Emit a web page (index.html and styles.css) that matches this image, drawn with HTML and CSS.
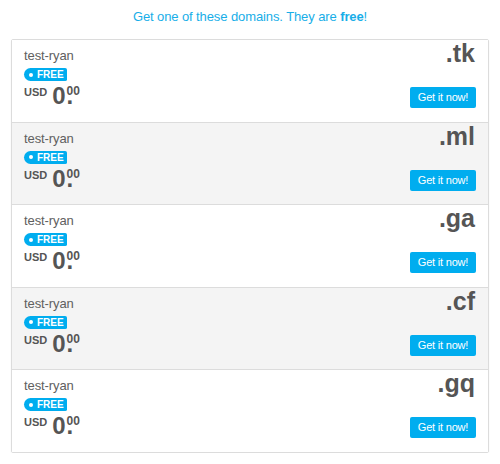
FILE: index.html
```html
<!DOCTYPE html>
<html>
<head>
<meta charset="utf-8">
<link rel="stylesheet" href="styles.css">
</head>
<body>
<p class="headline">Get one of these domains. They are <b>free</b>!</p>
<div class="card">
  <div class="row">
    <div class="left">
      <div class="name">test-ryan</div>
      <span class="badge"><span class="dot"></span>FREE</span>
      <div class="price"><span class="cur">USD</span><span class="int">0</span><span class="dec">00</span></div>
    </div>
    <div class="right">
      <div class="tld">.tk</div>
      <button class="btn">Get it now!</button>
    </div>
  </div>
  <div class="row alt">
    <div class="left">
      <div class="name">test-ryan</div>
      <span class="badge"><span class="dot"></span>FREE</span>
      <div class="price"><span class="cur">USD</span><span class="int">0</span><span class="dec">00</span></div>
    </div>
    <div class="right">
      <div class="tld">.ml</div>
      <button class="btn">Get it now!</button>
    </div>
  </div>
  <div class="row">
    <div class="left">
      <div class="name">test-ryan</div>
      <span class="badge"><span class="dot"></span>FREE</span>
      <div class="price"><span class="cur">USD</span><span class="int">0</span><span class="dec">00</span></div>
    </div>
    <div class="right">
      <div class="tld">.ga</div>
      <button class="btn">Get it now!</button>
    </div>
  </div>
  <div class="row alt">
    <div class="left">
      <div class="name">test-ryan</div>
      <span class="badge"><span class="dot"></span>FREE</span>
      <div class="price"><span class="cur">USD</span><span class="int">0</span><span class="dec">00</span></div>
    </div>
    <div class="right">
      <div class="tld">.cf</div>
      <button class="btn">Get it now!</button>
    </div>
  </div>
  <div class="row">
    <div class="left">
      <div class="name">test-ryan</div>
      <span class="badge"><span class="dot"></span>FREE</span>
      <div class="price"><span class="cur">USD</span><span class="int">0</span><span class="dec">00</span></div>
    </div>
    <div class="right">
      <div class="tld">.gq</div>
      <button class="btn">Get it now!</button>
    </div>
  </div>
</div>
</body>
</html>
```
FILE: styles.css
```css
* { box-sizing: border-box; }
html, body { margin: 0; padding: 0; background: #fff; }
body {
  font-family: "Liberation Sans", Arial, Helvetica, sans-serif;
  color: #555;
  padding: 0 11px;
  width: 500px;
}
.headline {
  margin: 0;
  padding-top: 9px;
  height: 39px;
  text-align: center;
  color: #17aee8;
  font-size: 13px;
  line-height: 16px;
  letter-spacing: -0.1px;
}
.headline b { font-weight: bold; }
.card {
  width: 478px;
  border: 1px solid #dcdcdc;
  border-radius: 2px;
  box-shadow: 0 1px 2px rgba(0,0,0,0.05);
}
.row {
  display: flex;
  justify-content: space-between;
  height: 82.5px;
  padding: 8px 13px 0 12px;
  border-top: 1px solid #dcdcdc;
  background: #fff;
}
.row:first-child { border-top: 0; height: 81.5px; }
.row.alt { background: #f4f4f4; }
.left { display: flex; flex-direction: column; align-items: flex-start; }
.name {
  font-size: 13px;
  line-height: 16px;
  color: #606060;
  letter-spacing: -0.1px;
}
.badge {
  display: inline-flex;
  align-items: center;
  margin-top: 4px;
  height: 13px;
  padding: 0 3px 0 5px;
  background: #00adef;
  color: #fff;
  font-size: 10px;
  font-weight: bold;
  line-height: 13px;
  border-radius: 7px 2px 2px 7px;
}
.dot {
  width: 4px;
  height: 4px;
  border-radius: 50%;
  background: #fff;
  margin-right: 4px;
}
.price {
  display: flex;
  align-items: flex-start;
  margin-top: 3px;
  height: 24px;
}
.cur {
  font-size: 11px;
  font-weight: bold;
  line-height: 11px;
  margin-top: 3px;
  margin-right: 5px;
  color: #555;
}
.int {
  font-size: 24px;
  font-weight: bold;
  line-height: 24px;
  color: #555;
}
.dec {
  position: relative;
  font-size: 12px;
  font-weight: bold;
  line-height: 12px;
  margin-top: 1px;
  margin-left: 1px;
  color: #555;
}
.dec::before {
  content: ".";
  position: absolute;
  left: 0;
  top: -1px;
  font-size: 24px;
  line-height: 24px;
}
.right {
  display: flex;
  flex-direction: column;
  align-items: flex-end;
}
.tld {
  font-size: 25px;
  font-weight: bold;
  line-height: 25px;
  margin-top: -7px;
  color: #555;
}
.btn {
  margin-top: 21px;
  margin-right: -1px;
  width: 66px;
  height: 21px;
  padding: 0;
  border: 0;
  border-radius: 2px;
  background: #00adef;
  color: #fff;
  font-family: "Liberation Sans", Arial, sans-serif;
  font-size: 11px;
  line-height: 21px;
  letter-spacing: -0.2px;
}
```
